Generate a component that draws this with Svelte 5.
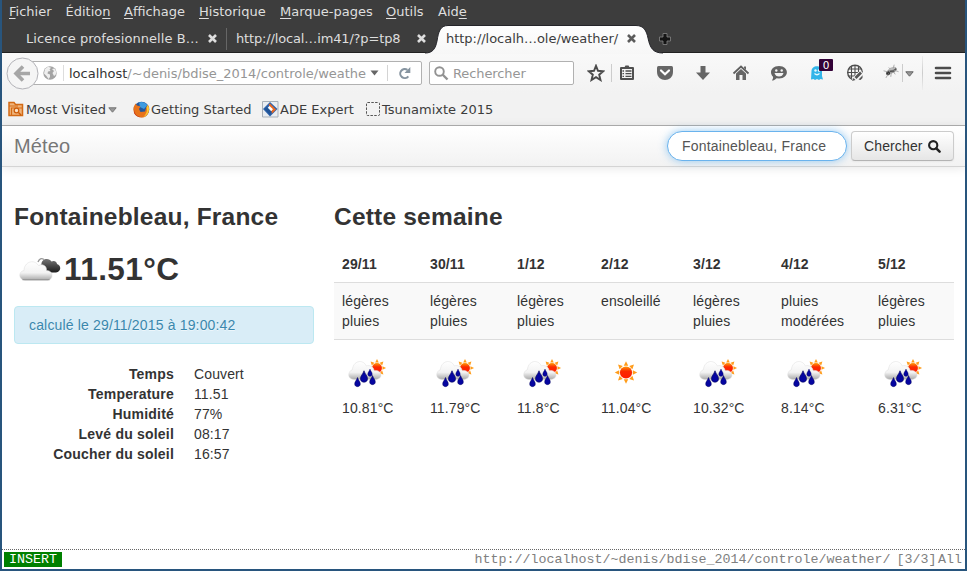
<script>
  const menus = [
    ['', 'F', 'ichier', 56.5], ['Éditio', 'n', '', 58.5], ['', 'A', 'ffichage', 75], ['', 'H', 'istorique', 81],
    ['', 'M', 'arque-pages', 106], ['', 'O', 'utils', 52], ['Aid', 'e', '', 40]
  ];
  const days = [
    ['29/11', 'légères pluies', 10.81, 88], ['30/11', 'légères pluies', 11.79, 87], ['1/12', 'légères pluies', 11.8, 84],
    ['2/12', 'ensoleillé', 11.04, 92], ['3/12', 'légères pluies', 10.32, 88], ['4/12', 'pluies modérées', 8.14, 97], ['5/12', 'légères pluies', 6.31, 84]
  ];
  const facts = [['Temps', 'Couvert'], ['Temperature', '11.51'], ['Humidité', '77%'], ['Levé du soleil', '08:17'], ['Coucher du soleil', '16:57']];
</script>

<svelte:head><title>Méteo</title></svelte:head>

{#snippet close(color)}
  <svg class="close" width="9" height="9" viewBox="0 0 9 9"><path d="M1 1L8 8M8 1L1 8" stroke={color} stroke-width="2.6" /></svg>
{/snippet}

{#snippet rays8(cx, cy, s)}
  <g transform="translate({cx} {cy}) scale({s})">
    {#each [0, 45, 90, 135, 180, 225, 270, 315] as a}
      <path d="M-2.3 -7L0 -11.6L2.3 -7Z" fill="#ff9c1a" transform="rotate({a})" />
    {/each}
    <circle r="6.3" fill="url(#sun)" />
  </g>
{/snippet}

<svg class="defs" width="0" height="0" aria-hidden="true">
  <defs>
    <linearGradient id="cloud" x1="0" y1="0" x2="0" y2="1"><stop offset="0" stop-color="#fff" /><stop offset=".6" stop-color="#f3f3f3" /><stop offset="1" stop-color="#a9a9a9" /></linearGradient>
    <linearGradient id="dark" x1="0" y1="0" x2="0" y2="1"><stop offset="0" stop-color="#777" /><stop offset=".5" stop-color="#494949" /><stop offset="1" stop-color="#1c1c1c" /></linearGradient>
    <linearGradient id="sun" x1="0" y1="0" x2="0" y2="1"><stop offset="0" stop-color="#ff9a08" /><stop offset=".4" stop-color="#fb2a00" /><stop offset="1" stop-color="#ff1c00" /></linearGradient>
    <linearGradient id="tabfill" x1="0" y1="0" x2="0" y2="1"><stop offset="0" stop-color="#fefefe" /><stop offset="1" stop-color="#f7f7f7" /></linearGradient>
  </defs>
</svg>

<div class="window">
  <div class="menubar">
    {#each menus as [a, u, b, w]}<span style:width="{w}px">{a}<u>{u}</u>{b}</span>{/each}
  </div>

  <div class="tabs">
    <div class="tab first"><span>Licence profesionnelle B…</span>{@render close('#dedede')}</div>
    <div class="tab second"><span>http://local…im41/?p=tp8</span>{@render close('#dedede')}</div>
    <div class="tab active">
      <svg class="shape" width="238" height="29" viewBox="0 0 238 29"><path d="M0 29V28C8 28 10.5 23.500 12 16C13.500 7 15 .5 23 .5H211C219 .5 221.500 6 223 13C225 23 228 28 238 28V29Z" fill="url(#tabfill)" /><path d="M0 28C8 28 10.500 23.500 12 16C13.500 7 15 .5 23 .5H211C219 .5 221.500 6 223 13C225 23 228 28 238 28" fill="none" stroke="#25252a" stroke-width="1" /></svg>
      <span>http://localh…ole/weather/</span>{@render close('#5b5b5b')}
    </div>
    <svg class="plus" width="12" height="12" viewBox="0 0 12 12"><path d="M4 .5H8V4H11.500V8H8V11.500H4V8H.5V4H4Z" fill="#141414" stroke="#858585" stroke-width=".8" /></svg>
  </div>

  <div class="toolbar">
    <div class="urlbar">
      <svg class="back" width="33" height="33" viewBox="0 0 33 33"><circle cx="16.500" cy="16.500" r="15.500" fill="#f5f5f5" stroke="#b3b3b8" /><path d="M17 9.500L10 16.500L17 23.500M11 16.500H24" fill="none" stroke="#a6a6a6" stroke-width="3.600" /></svg>
      <svg class="site" width="14" height="14" viewBox="0 0 14 14"><circle cx="7" cy="7" r="6.700" fill="#a4a4a4" /><path d="M2 3L5 .8L8 1.800L6.500 3.500L7.500 5L5 5.500L4.500 7.500L7 8.500L7 11L5.500 13L3.500 10L1 7.500ZM9 3L11.500 2.500L13.500 6L12.500 9L11 10L9.500 7L11 5Z" fill="#efefef" /></svg>
      <div class="address"><b>localhost</b>/~denis/bdise_2014/controle/weathe</div>
      <svg class="drop" width="9" height="6" viewBox="0 0 9 6"><path d="M.5 .5H8.500L4.500 5.500Z" fill="#666" /></svg>
      <i class="split"></i>
      <svg class="reload" width="13" height="13" viewBox="0 0 13 13"><path d="M9.400 2.900A4.500 4.500 0 1 0 10.300 9.300" fill="none" stroke="#8694a0" stroke-width="2.100" /><path d="M12.300 0V6H6.500Z" fill="#8694a0" /></svg>
    </div>
    <div class="search">
      <svg width="15" height="15" viewBox="0 0 15 15"><circle cx="5.500" cy="5.500" r="4.300" fill="none" stroke="#929292" stroke-width="1.900" /><path d="M8.500 8.500L13.500 13.500" stroke="#929292" stroke-width="2.400" /></svg>
      <span>Rechercher</span>
    </div>
    <div class="icons">
      <svg width="18" height="18" viewBox="0 0 18 18"><path d="M9 1.800L11 6.800L16.200 7.200L12.200 10.700L13.500 16L9 13.200L4.500 16L5.800 10.700L1.800 7.200L7 6.800Z" fill="none" stroke="#4b4b4b" stroke-width="1.900" /></svg>
      <i class="line l1"></i>
      <svg class="list" width="18" height="18" viewBox="0 0 18 18"><path d="M3 4H15V15H3Z" fill="#f4f4f4" stroke="#505050" stroke-width="2" stroke-linejoin="round" /><path d="M4.500 7H6M7.500 7H13.500M4.500 9.700H6M7.500 9.700H13.500M4.500 12.400H6M7.500 12.400H13.500" stroke="#505050" stroke-width="1.300" /><path d="M6 4L7.500 1.500H10.500L12 4Z" fill="#505050" /></svg>
      <svg width="18" height="18" viewBox="0 0 18 18"><path d="M2.500 2H15.500Q17 2 17 3.500V8C17 18.500 1 18.500 1 8V3.500Q1 2 2.500 2Z" fill="#666" /><path d="M5 6.500L9 10.300L13 6.500" fill="none" stroke="#fff" stroke-width="2.200" stroke-linecap="round" /></svg>
      <svg width="18" height="18" viewBox="0 0 18 18"><path d="M6.500 2H11.500V8.500H16L9 16L2 8.500H6.500Z" fill="#666" /></svg>
      <svg width="18" height="18" viewBox="0 0 18 18"><path d="M1.500 9.500L9 2.500L16.500 9.500" fill="none" stroke="#606060" stroke-width="1.800" /><path d="M4 9.500L9 5L14 9.500V16H10.500V11H7.500V16H4ZM12 2.500H14V6L12 4Z" fill="#666" /></svg>
      <svg width="18" height="18" viewBox="0 0 18 18"><path d="M9 2C19.500 2 19.500 14.500 9 14.500L6.500 14.200C5 15.800 3.500 16.500 2 16.500C3 15 3.200 14 3 12.800C-1 9 1 2 9 2Z" fill="#646464" /><circle cx="6.300" cy="6.500" r="1.200" fill="#f4f4f4" /><circle cx="11.700" cy="6.500" r="1.200" fill="#f4f4f4" /><path d="M4.500 9H13.500Q12.500 12.500 9 12.500T4.500 9Z" fill="#f4f4f4" /></svg>
      <span class="ghost"><svg width="18" height="18" viewBox="0 0 18 18"><path d="M3.500 7C3.500 .5 14 .5 14 7V12L15 15.500L12.500 15L11 16L9 15L7 16L5.500 15L3 15.500Z" fill="#33b5e9" /><circle cx="7.500" cy="6.500" r="1.200" fill="#e8faff" /><circle cx="11" cy="6.500" r="1.200" fill="#e8faff" /><path d="M6.500 9.500Q9 12 11.500 9.500" fill="none" stroke="#e8faff" stroke-width="1.200" /></svg><em>0</em></span>
      <svg width="18" height="18" viewBox="0 0 18 18"><g fill="none" stroke="#4d4d4d" stroke-width="1.100"><circle cx="9" cy="8.500" r="7.300" stroke-width="1.400" /><path d="M3 5H15M1.700 8.500H12M3 12H9M5.500 2.500V14M9 1.500V12M12.500 2.500V8" /></g><path d="M5.500 17L7 13.500L14 6.500L18 9.500L13 17Z" fill="#f3f3f3" /><path d="M6 17L7.500 14L9.500 16ZM8.500 13L14 7.500L16 9.500L10.500 15ZM12.500 15.500L16.500 11.500V14L14.500 16Z" fill="#555" /></svg>
      <svg class="fly" width="18" height="18" viewBox="0 0 18 18"><g transform="translate(0 -1) rotate(-18 9 8)"><ellipse cx="9.500" cy="8" rx="4.500" ry="2.500" fill="#999" /><circle cx="5.500" cy="9.300" r="2" fill="#333" /><circle cx="13.500" cy="7.500" r="1.500" fill="#555" /><ellipse cx="11" cy="6" rx="3.500" ry="1.400" fill="#bbb" /><path d="M2 5.500L6 8M2 13L6 9.500M7 13.500L9 9M12 12.500L11 9M16 11L12 8M8 4L9 6M14 3L12 6" stroke="#999" stroke-width=".7" /><path d="M8 8L12 9" stroke="#333" /></g></svg>
      <i class="line l2"></i>
      <svg class="small" width="9" height="6" viewBox="0 0 9 6"><path d="M.8 .8H8.200L4.500 5.200Z" fill="#999" stroke="#666" /></svg>
      <i class="line l3"></i>
      <svg class="burger" width="18" height="14" viewBox="0 0 18 14"><path d="M2 2H16M2 7H16M2 12H16" stroke="#4c4c4c" stroke-width="2.600" stroke-linecap="round" /></svg>
    </div>
  </div>

  <div class="bookmarks">
    <div style="width:125px">
      <svg width="16" height="16" viewBox="0 0 16 16"><path d="M1 14.500V1.500H6L7.500 3.500H14.500V14.500Z" fill="#f0b57c" stroke="#d36a14" stroke-width="1.500" /><path d="M1 5H10M3.500 14V7H14" fill="none" stroke="#d36a14" stroke-width="1.200" /><circle cx="8.500" cy="9.500" r="2.300" fill="#fbe3c8" stroke="#cc5b08" stroke-width="1.200" /><path d="M10.500 11.500L13 14" stroke="#cc5b08" stroke-width="1.500" /></svg>
      <span>Most Visited</span><svg class="small" width="9" height="6" viewBox="0 0 9 6"><path d="M.8 .8H8.200L4.500 5.200Z" fill="#999" stroke="#777" /></svg>
    </div>
    <div class="tight" style="width:129px">
      <svg width="17" height="17" viewBox="0 0 17 17"><circle cx="8.500" cy="8.500" r="7.800" fill="#25589b" /><path d="M6 1.500Q11 0 14.500 4L11 8L7 6Z" fill="#3d9be0" /><path d="M.7 6L2.500 2.500L4 4.500L7.500 5.500L6 8L7.500 11L12 10.500L13.500 6L14.800 3.800C18 9 15 16.500 8.500 16.500C2.500 16.500 -.5 11.500 .7 6Z" fill="#e8731b" /><path d="M13.500 6L15 4C17.500 9 15 14.500 10.500 16C14 12 14.500 9.500 13.500 6Z" fill="#f9c632" /><path d="M1 9Q2 15 8 16.300Q3 16 1 12Z" fill="#c6381a" /></svg>
      <span>Getting Started</span>
    </div>
    <div class="tight" style="width:103px">
      <svg width="17" height="17" viewBox="0 0 17 17"><path d="M.5 .5H16V16H.5Z" fill="#e9edf2" stroke="#a7afb8" /><path d="M1 8L8 1L15.500 8L8 15.500Z" fill="#2d62aa" /><path d="M5 7.500L8.500 4L12 7.500L8.500 11.500Z" fill="#fff" /><path d="M8 2.500L14 8.500L10 12.500L8.500 11L11 8.300L6.500 4Z" fill="#ea6822" /><path d="M2.500 8L5 6L10 11L8 14Z" fill="#215497" /></svg>
      <span>ADE Expert</span>
    </div>
    <div class="tight">
      <svg width="16" height="16" viewBox="0 0 16 16"><rect x="1.500" y="1.500" width="13" height="13" rx="1" fill="none" stroke="#555" stroke-dasharray="2.500 1.300" /></svg>
      <span>Tsunamixte 2015</span>
    </div>
  </div>

  <div class="navbar">
    <span class="brand">Méteo</span>
    <div class="query">Fontainebleau, France</div>
    <div class="btn">Chercher <svg width="13" height="13" viewBox="0 0 13 13"><circle cx="5.200" cy="5.200" r="4.100" fill="none" stroke="#222" stroke-width="2.100" /><path d="M8.300 8.300L11.600 11.600" stroke="#222" stroke-width="2.500" stroke-linecap="round" /></svg></div>
  </div>

  <div class="page">
    <div class="side">
      <h3>Fontainebleau, France</h3>
      <div class="now">
        <svg width="50" height="50" viewBox="0 0 50 50">
          <path d="M24 16Q26 11 30 13.500" fill="none" stroke="#999" stroke-width="1.400" />
          <path d="M28 26.500C24 26 23 20 27.500 18.500C27 12.500 35 11 37.500 15.500C40.500 14 43 16 43 18C47.500 19 47.500 26 42 26.500Z" fill="url(#dark)" />
          <path d="M11 34.200C4.500 34 4 25.500 10 24.500C10 16 20 12.500 24.500 19.500C29 17.500 33 20 32.500 24.500C39.500 24 40 34 33.500 34.200Z" fill="url(#cloud)" stroke="#dadada" stroke-width=".5" />
          <path d="M9 33.700H35" stroke="#999" stroke-width="1.300" stroke-linecap="round" />
        </svg>
        <h2>11.51°C</h2>
      </div>
      <div class="alert">calculé le 29/11/2015 à 19:00:42</div>
      <dl>{#each facts as [k, v]}<dt>{k}</dt><dd>{v}</dd>{/each}</dl>
    </div>
    <div class="week">
      <h3>Cette semaine</h3>
      <table>
        <colgroup>{#each days as d}<col style:width="{d[3]}px" />{/each}</colgroup>
        <thead><tr>{#each days as d}<th>{d[0]}</th>{/each}</tr></thead>
        <tbody>
          <tr class="odd">{#each days as d}<td>{d[1]}</td>{/each}</tr>
          <tr>
            {#each days as d}
              <td>
                <svg class="wx" width="50" height="50" viewBox="0 0 50 50">
                  {#if d[1] === 'ensoleillé'}
                    {@render rays8(25, 24.5, 0.97)}
                  {:else}
                    {@render rays8(35, 20, 0.78)}
                    <path d="M12 31.500C5 31 5.500 23.500 10.500 21.500C11 13 20.500 10.500 24.500 18C28 16.500 32 19.500 32 22.500C36 22 39 24 39 27C39 30 36 31.500 33 31.500Z" fill="url(#cloud)" stroke="#ddd" stroke-width=".5" />
                    {#each [[15.5, 34.5, 1], [22, 29, 1.25], [28, 25, 0.78], [30.500, 32.5, 1]] as [x, y, s]}
                      <path d="M0 -5C1 -2 2.800 -1 2.800 1.500C2.800 5 -2.800 5 -2.800 1.500C-2.800 -1 -1 -2 0 -5Z" fill="#0505a0" stroke="#02025c" stroke-width=".5" transform="translate({x} {y}) scale({s})" />
                    {/each}
                  {/if}
                </svg>
                <div>{d[2]}°C</div>
              </td>
            {/each}
          </tr>
        </tbody>
      </table>
    </div>
  </div>

  <div class="status"><b>INSERT</b><span class="loc">http://localhost/~denis/bdise_2014/controle/weather/</span><span class="pos">[3/3]</span><span>All</span></div>
</div>

<style>
  :global(body) { margin: 0; background: #28557d; }
  .defs { position: absolute; }
  svg { display: block; flex: none; }
  .window { box-sizing: border-box; width: 967px; height: 571px; border: 2px solid #28557d; border-top: 0; background: #fff; display: flex; flex-direction: column; overflow: hidden; font: 13px 'DejaVu Sans', sans-serif; color: #3c3c3c; white-space: nowrap; }
  .menubar { height: 25px; background: #3d3d3d; color: #dfdfdf; display: flex; padding-left: 7px; line-height: 23px; flex: none; }
  .menubar u { text-underline-offset: 2px; text-decoration-thickness: 1px; }
  .tabs { height: 28px; box-sizing: border-box; background: #3d3d3d; border-bottom: 1px solid #222; display: flex; flex: none; color: #dedede; line-height: 28px; position: relative; }
  .tab { display: flex; box-sizing: border-box; position: relative; height: 28px; }
  .close { margin: 9px 0 0 auto; z-index: 1; }
  .first { width: 225px; padding: 0 10.500px 0 24px; letter-spacing: .05px; }
  .first::after { content: ''; position: absolute; right: 0; top: 3px; width: 1px; height: 22px; background: #666; }
  .second { width: 209px; padding: 0 10px 0 9px; letter-spacing: -.15px; }
  .active { width: 214px; padding: 0 14px 0 10px; color: #3d3d3d; letter-spacing: -.03px; }
  .active span { z-index: 1; }
  .shape { position: absolute; left: -11px; top: 0; }
  .plus { margin: 8px 0 0 9px; }
  .toolbar { height: 40px; flex: none; display: flex; align-items: center; background: linear-gradient(#f9f9f9, #f2f2f2); }
  .urlbar { position: relative; margin-left: 20px; width: 400px; height: 24px; box-sizing: border-box; border: 1px solid #b1b1b1; border-radius: 2px; background: #fff; display: flex; align-items: center; }
  .back { position: absolute; left: -17.500px; top: -5px; }
  .site { margin-left: 20px; }
  .address { margin-left: 6px; padding-left: 5px; border-left: 1px solid #ddd; height: 16px; line-height: 17px; width: 296px; color: #969696; }
  .address b { font-weight: 400; color: #333; }
  .drop { margin-left: 5px; }
  .split { width: 1px; height: 16px; margin-left: 8px; background: #d4d4d4; }
  .reload { margin-left: 10px; }
  .search { margin-left: 7px; width: 145px; height: 24px; box-sizing: border-box; border: 1px solid #b1b1b1; border-radius: 2px; background: #fff; display: flex; align-items: center; padding-left: 4px; color: #969696; gap: 4px; letter-spacing: -.1px; }
  .icons { display: flex; align-items: center; gap: 20px; margin-left: 13px; height: 40px; }
  .line { width: 1px; height: 18px; background: #ccc; }
  .l1 { margin: 0 -14px; }
  .ghost { position: relative; }
  .ghost em { position: absolute; left: 11px; top: -5px; width: 14px; height: 12px; background: #340238; color: #fff; font: 10.500px/12px 'DejaVu Sans', sans-serif; text-align: center; border-radius: 1px; }
  .fly { margin-left: -2px; }
  .l2 { margin: 0 -18px 0 -18px; }
  .small { margin-top: 2px; }
  .l3 { height: 34px; margin: 0 -9px 0 -12px; background: linear-gradient(#eee, #ccc, #eee); }
  .bookmarks { height: 32px; flex: none; display: flex; align-items: center; padding-left: 6px; background: #f2f2f2; border-bottom: 1px solid #b0b0b0; }
  .bookmarks > div { display: flex; align-items: center; gap: 2px; letter-spacing: .08px; }
  .bookmarks > .tight { gap: 1px; letter-spacing: 0; }
  .navbar { height: 40px; flex: none; display: flex; align-items: center; padding: 0 11px 0 12px; background: linear-gradient(#fff, #f2f2f2); border-bottom: 1px solid #d4d4d4; box-shadow: 0 1px 10px rgba(0, 0, 0, .1); font: 14px/20px 'Liberation Sans', sans-serif; }
  .brand { font-size: 20px; color: #777; margin-right: auto; text-shadow: 0 1px 0 #fff; letter-spacing: .15px; }
  .query { box-sizing: border-box; width: 180px; height: 30px; border: 1px solid #6ab3ed; border-radius: 15px; background: #fff; box-shadow: 0 0 8px rgba(82, 168, 236, .6); padding: 4px 14px; color: #555; letter-spacing: .2px; }
  .btn { box-sizing: border-box; width: 103px; height: 30px; margin-left: 4px; border: 1px solid #ccc; border-bottom-color: #b3b3b3; border-radius: 4px; background: linear-gradient(#fff, #e6e6e6); display: flex; align-items: center; gap: 5px; padding-left: 12px; color: #333; box-shadow: 0 1px 2px rgba(0, 0, 0, .05); letter-spacing: .13px; }
  .page { flex: 1; display: flex; gap: 20px; padding: 29px 12px 0; font: 14px/20px 'Liberation Sans', sans-serif; color: #333; letter-spacing: .12px; }
  .side { width: 300px; flex: none; }
  h3 { font-size: 24.500px; line-height: 41px; margin: 0 0 9px; letter-spacing: .2px; }
  .now { display: flex; height: 50px; align-items: center; margin-bottom: 10px; }
  h2 { font-size: 31.500px; line-height: 40px; margin: 0 0 4px; letter-spacing: .43px; }
  .alert { box-sizing: border-box; height: 38px; padding: 8px 14px; border: 1px solid #bce8f1; border-radius: 4px; background: #d9edf7; color: #3a87ad; margin-bottom: 20px; text-shadow: 0 1px 0 rgba(255, 255, 255, .5); letter-spacing: .16px; }
  dl { margin: 0; display: grid; grid-template-columns: 160px auto; column-gap: 20px; }
  dt { text-align: right; font-weight: 700; letter-spacing: .2px; }
  dd { margin: 0; }
  .week { width: 620px; }
  table { width: 620px; table-layout: fixed; border-collapse: separate; border-spacing: 0; white-space: normal; }
  th, td { text-align: left; vertical-align: top; padding: 8px; }
  td { border-top: 1px solid #ddd; }
  .odd td { background: #f9f9f9; }
  .status { box-sizing: border-box; height: 20px; flex: none; border-top: 1px dotted #666; display: flex; align-items: center; padding: 0 3px 0 2px; font: 13.333px/15px 'Liberation Mono', monospace; color: #808080; }
  .status b { background: #008000; color: #fff; padding: 0 5px; margin-right: auto; font-weight: 400; }
  .pos { margin: 0 1.500px 0 6px; }
</style>
